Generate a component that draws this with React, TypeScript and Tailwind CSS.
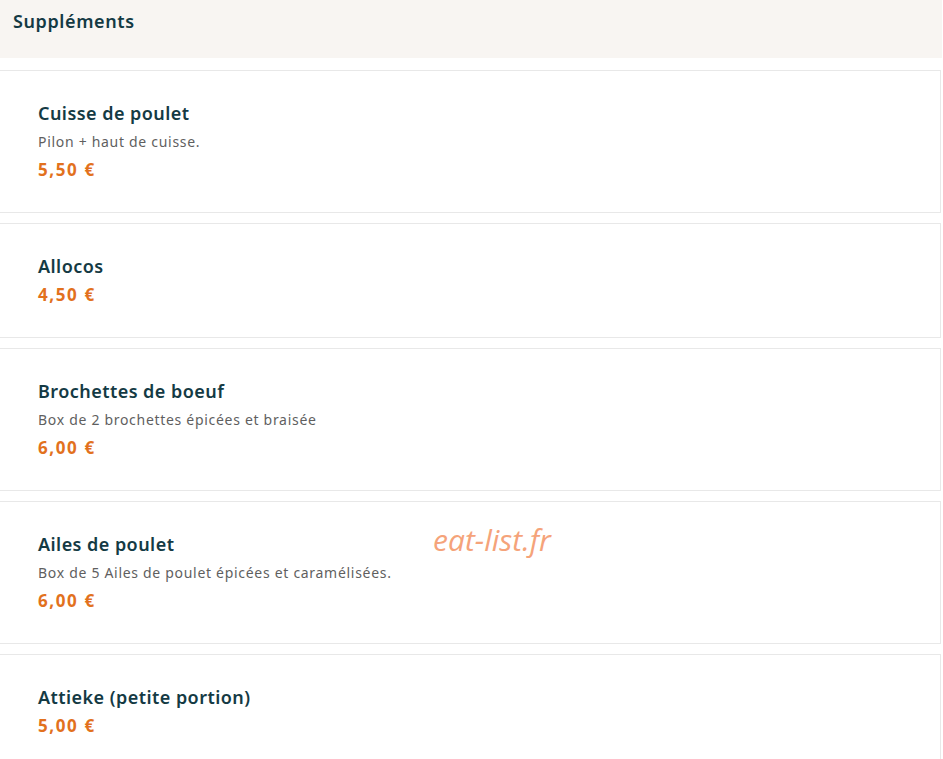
import React from "react";

type Item = { name: string; desc?: string; price: string };

const items: Item[] = [
  { name: "Cuisse de poulet", desc: "Pilon + haut de cuisse.", price: "5,50 €" },
  { name: "Allocos", price: "4,50 €" },
  { name: "Brochettes de boeuf", desc: "Box de 2 brochettes épicées et braisée", price: "6,00 €" },
  { name: "Ailes de poulet", desc: "Box de 5 Ailes de poulet épicées et caramélisées.", price: "6,00 €" },
  { name: "Attieke (petite portion)", price: "5,00 €" },
];

function App() {
  return (
    <div className="relative w-[943px] h-[759px] overflow-hidden bg-white font-['Noto_Sans',sans-serif]">
      <div className="w-[942px] h-[58px] bg-[#f8f5f2] px-[13px] pt-[8px]">
        <h2 className="text-[18px] leading-[26px] font-semibold tracking-[0.6px] text-[#143a44]">Suppléments</h2>
      </div>

      <div className="mt-[12px] flex flex-col gap-[10px] w-[941px]">
        {items.map((item, i) => (
          <div key={i} className="border border-l-0 border-[#e8e8e8] bg-white pl-[38px] pt-[28px] pb-[29px]">
            <h3 className="text-[18px] leading-[28px] font-semibold tracking-[0.45px] text-[#143a44]">{item.name}</h3>
            {item.desc && (
              <p className="pt-[2px] text-[14px] leading-[26px] tracking-[0.7px] text-[#5f5f5f]">{item.desc}</p>
            )}
            <p className="pt-[1px] text-[17px] leading-[27px] font-bold tracking-[1.6px] text-[#e2711d]">{item.price}</p>
          </div>
        ))}
      </div>

      <div className="absolute left-[433px] top-[520px] text-[30px] leading-[40px] italic text-[#f5a37a] font-['Open_Sans',sans-serif]">
        eat-list.fr
      </div>
    </div>
  );
}

export default App;
